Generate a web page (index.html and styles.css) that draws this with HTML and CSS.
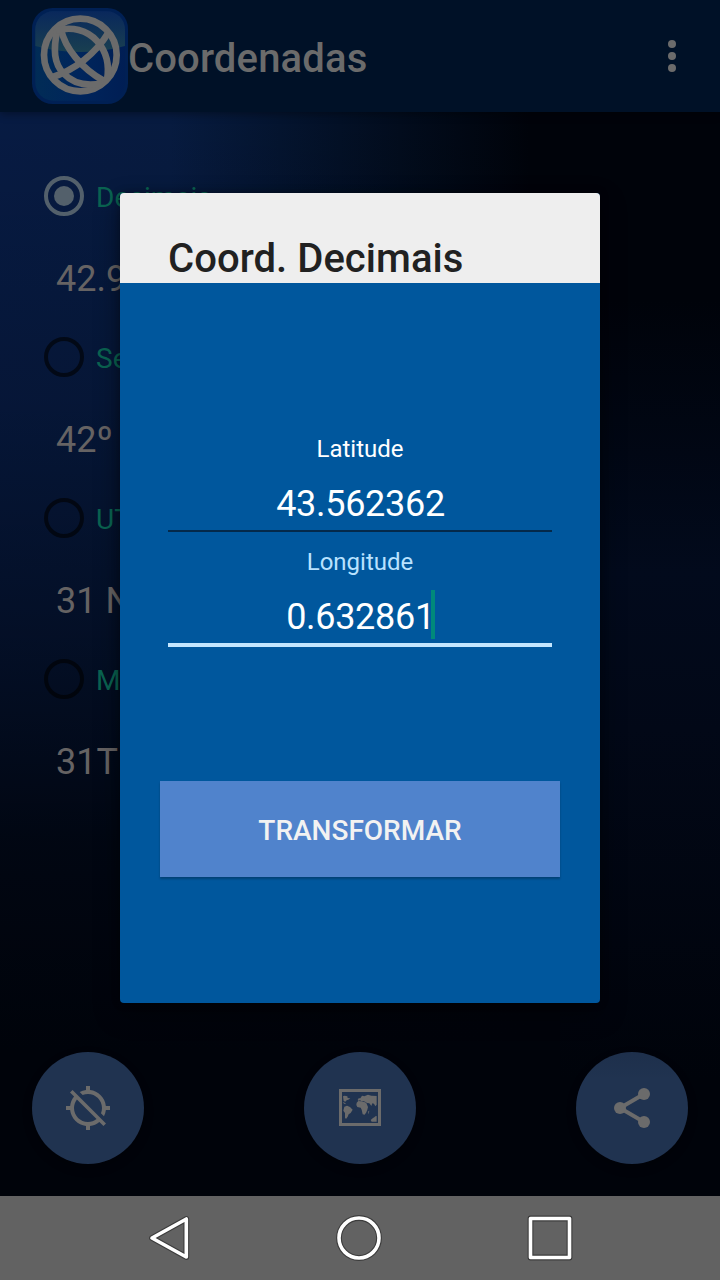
FILE: index.html
```
<!DOCTYPE html>
<html lang="pt">
<head>
  <meta charset="UTF-8" />
  <meta name="viewport" content="width=device-width, initial-scale=1.0" />
  <title>Coordenadas</title>
  <link rel="stylesheet" href="styles.css">
</head>
<body>
  <div class="screen">
    <header class="appbar">
      <svg class="logo" viewBox="96 24 288 288">
        <defs>
          <linearGradient id="base" x1="0" y1="0" x2="1" y2="0">
            <stop offset="0" stop-color="#012c56" />
            <stop offset="0.5" stop-color="#00255c" />
            <stop offset="1" stop-color="#001e54" />
          </linearGradient>
          <linearGradient id="gloss" x1="0" y1="0" x2="0" y2="1">
            <stop offset="0" stop-color="#09285c" />
            <stop offset="1" stop-color="#193f50" />
          </linearGradient>
        </defs>
        <rect x="96" y="24" width="288" height="288" rx="62" fill="#002054" />
        <rect x="106" y="34" width="269" height="268" rx="54" fill="url(#base)" />
        <path d="M106 138V88a54 54 0 0 1 54-54h161a54 54 0 0 1 54 54v50q-134 36-269 0z" fill="url(#gloss)" />
        <g fill="none" stroke="#6b6b6b" stroke-width="20">
          <circle cx="241" cy="165" r="109" />
          <path d="M325 98C288 160 225 210 152 233" />
          <path d="M183 88C195 145 245 205 312 243" />
          <path d="M172 90C159 150 162 190 190 220S258 260 306 250" />
          <path d="M168 92C215 78 262 90 292 124S329 195 321 240" />
        </g>
      </svg>
      <h1>Coordenadas</h1>
      <div class="menu"><i></i><i></i><i></i></div>
    </header>

    <main class="formats">
      <div class="format selected"><span class="radio"></span><span class="name">Decimais</span></div>
      <p class="value">42.9</p>
      <div class="format"><span class="radio"></span><span class="name">Sexag.</span></div>
      <p class="value">42º</p>
      <div class="format"><span class="radio"></span><span class="name">UTM</span></div>
      <p class="value">31 N</p>
      <div class="format"><span class="radio"></span><span class="name">MGRS</span></div>
      <p class="value">31T</p>
    </main>

    <div class="actions">
      <div class="fab">
        <svg viewBox="0 0 24 24" width="48" height="48">
          <path d="M20.94 11c-.46-4.17-3.77-7.48-7.94-7.94V1h-2v2.06c-1.13.12-2.19.46-3.16.97l1.5 1.5C10.16 5.19 11.06 5 12 5c3.87 0 7 3.13 7 7 0 .94-.19 1.84-.52 2.65l1.5 1.5c.5-.96.84-2.02.97-3.15H23v-2h-2.06zM3 4.27l2.04 2.04C3.97 7.62 3.25 9.23 3.06 11H1v2h2.06c.46 4.17 3.77 7.48 7.94 7.94V23h2v-2.06c1.77-.2 3.38-.91 4.69-1.98L19.73 21 21 19.73 4.27 3 3 4.27zm13.27 13.27C15.09 18.45 13.61 19 12 19c-3.87 0-7-3.13-7-7 0-1.61.55-3.09 1.46-4.27l9.81 9.81z" />
        </svg>
      </div>
      <div class="fab">
        <!-- world map -->
        <svg class="map" viewBox="147 147 126 111" width="42" height="37">
          <path fill-rule="evenodd" d="M147 147h126v111H147zM156 156v93h108v-93z" />
          <path d="M159 169l5-2 8 2 1 5 8 1-6 4-5 2-4 4-5-2zM158 186l6 2 5 5-7-2zM163 200l8-3 9 4 8 8-6 10-6 4-3 7-5 7-3-4v-14l-5-7zM200 188l5-5 8 1 10 2 6 3 5 12-2 8-3 8-5 7-6-1-3-14-3-6-10-2-3-6zM203 180l3-5 5 0 5-8 7 2 11-5 10 3 16 1v26l-4 5-4-8-5-1-3 8-6-8-7-1-6-4-5-2-5 1-5-3-5 1zM242 240l7-6 4-2 3-3 4-1v17h-15zM235 214l3-2-2 8-2 2z" />
        </svg>
      </div>
      <div class="fab">
        <svg viewBox="0 0 24 24" width="48" height="48">
          <path d="M18 5L6 12l12 7" fill="none" stroke="#6b6b6b" stroke-width="2" />
          <circle cx="18" cy="5" r="3" /><circle cx="6" cy="12" r="3" /><circle cx="18" cy="19" r="3" />
        </svg>
      </div>
    </div>

    <nav class="navbar">
      <svg viewBox="0 0 48 48">
        <path class="edge" d="M7 24L41.3 5v38z" />
        <path d="M7 24L41.3 5v38z" />
      </svg>
      <svg viewBox="0 0 48 48">
        <circle class="edge" cx="23" cy="24" r="20" />
        <circle cx="23" cy="24" r="20" />
      </svg>
      <svg viewBox="0 0 48 48">
        <rect class="edge" x="4.5" y="4.5" width="39" height="39" />
        <rect x="4.5" y="4.5" width="39" height="39" />
      </svg>
    </nav>

    <section class="dialog">
      <h2>Coord. Decimais</h2>
      <div class="fields">
        <div class="field">
          <label>Latitude</label>
          <div class="input">43.562362</div>
        </div>
        <div class="field focused">
          <label>Longitude</label>
          <div class="input"><span class="typed">0.632861</span></div>
        </div>
      </div>
      <button class="submit">TRANSFORMAR</button>
    </section>
  </div>
</body>
</html>
```
FILE: styles.css
```
* { box-sizing: border-box; }
body { margin: 0; font-family: Roboto, sans-serif; background: #00030a; }
h1, h2, p { margin: 0; }

.screen {
  position: relative;
  display: flex;
  flex-direction: column;
  width: 720px;
  height: 1280px;
  overflow: hidden;
  background:
    linear-gradient(to bottom, transparent 112px, rgba(0,3,10,0.2) 400px, rgba(0,3,10,0.5) 640px, rgba(0,3,10,0.85) 840px, #00030a 1050px),
    linear-gradient(to right, #071b43 0, #071b40 170px, #04142f 280px, #020c1d 400px, #00030a 530px);
}
/* faint blue glow on the right side */
.screen::before {
  content: "";
  position: absolute;
  inset: 300px 0 200px 560px;
  background: linear-gradient(to bottom, transparent, #020a1c 35%, #020817 55%, transparent);
}

.appbar { display: flex; align-items: center; height: 112px; padding: 0 36px 0 32px; background: #001127; box-shadow: 0 2px 8px rgba(0,0,0,0.35); }
.logo { width: 96px; height: 96px; }
.appbar h1 { margin: 4px 0 0 0; font-size: 40px; font-weight: 500; line-height: 47px; letter-spacing: 0.15px; color: #6b6b6b; }
.menu { display: flex; flex-direction: column; gap: 4px; width: 24px; align-items: center; margin-left: auto; }
.menu i { width: 8px; height: 8px; border-radius: 50%; background: #6b6b6b; }

.formats { flex: 1; padding: 52px 0 0 44px; }
.format { display: flex; align-items: center; gap: 12px; height: 64px; font-size: 28px; line-height: 33px; color: #0a6351; }
.name { padding-top: 3px; }
.radio { display: flex; align-items: center; justify-content: center; width: 40px; height: 40px; border: 4px solid rgba(0,0,0,0.6); border-radius: 50%; }
.selected .radio { border-color: #53606b; }
.selected .radio::after { content: ""; width: 20px; height: 20px; border-radius: 50%; background: #53606b; }
.value { height: 97px; padding: 30px 0 0 12px; font-size: 36px; line-height: 42px; color: #666363; }

.actions { display: flex; justify-content: space-between; padding: 0 32px 32px; }
.fab { display: flex; align-items: center; justify-content: center; width: 112px; height: 112px; border-radius: 50%; background: #203350; box-shadow: 0 4px 10px rgba(0,0,0,0.25); }
.fab svg { fill: #6b6b6b; }
.fab .map { margin-bottom: 1px; }

.navbar { display: flex; align-items: center; gap: 142.5px; height: 84px; padding-left: 145px; background: #626262; }
.navbar svg { width: 48px; height: 48px; fill: none; stroke: #fff; stroke-width: 3.6; stroke-linejoin: round; }
.navbar .edge { stroke: #3c3c3c; stroke-width: 5.8; }

.dialog {
  position: absolute;
  top: 193px;
  left: 120px;
  display: flex;
  flex-direction: column;
  width: 480px;
  height: 810px;
  border-radius: 4px;
  overflow: hidden;
  background: #00579d;
  box-shadow: 0 10px 26px rgba(0,0,0,0.4), 0 0 8px rgba(0,0,0,0.3);
}
.dialog h2 { height: 90px; padding: 42px 48px 0; font-size: 40px; font-weight: 500; line-height: 47px; letter-spacing: 0.05px; color: #212121; background: #eee; }
.fields { padding: 152px 48px 0; text-align: center; color: #fff; }
.field { height: 113px; }
.field label { display: block; font-size: 24px; line-height: 28px; }
.input { height: 69px; padding: 20px 0 0 1px; font-size: 36px; line-height: 42px; letter-spacing: -0.3px; border-bottom: 2px solid #04294a; }
.focused label { color: #b9e2ff; }
.focused .input { height: 71px; border-bottom: 4px solid #c3e6ff; }
.typed { position: relative; }
/* text cursor */
.typed::after { content: ""; position: absolute; left: 100%; top: -6px; width: 4px; height: 49px; margin-left: -4px; background: #00897b; }
.submit { width: 400px; height: 96px; margin: 120px 40px 0; padding: 2px 0 0; border: none; font: 500 28px Roboto, sans-serif; color: #f2f2f2; background: #5083cc; box-shadow: 0 2px 2px rgba(0,0,0,0.25); }
```
